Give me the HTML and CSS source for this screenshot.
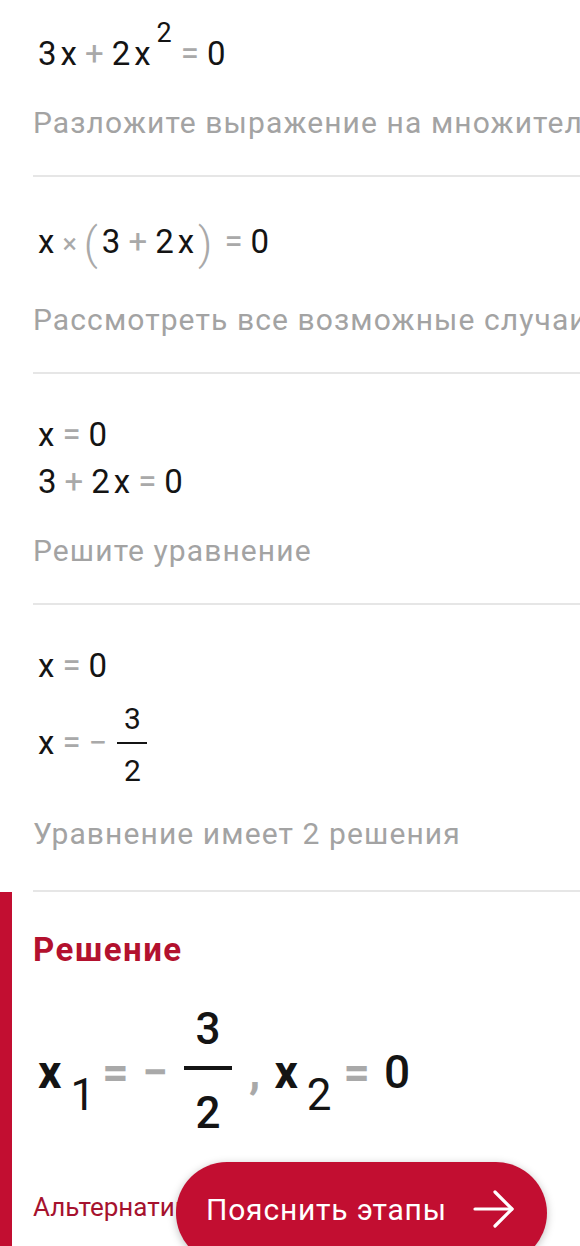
FILE: index.html
```html
<!DOCTYPE html>
<html lang="ru">
<head>
    <meta charset="UTF-8">
    <meta name="viewport" content="width=device-width, initial-scale=1.0">
    <title>Решение уравнения</title>
    <link rel="stylesheet" href="styles.css">
</head>
<body>
    <div class="page">
        <div class="steps">
            <div class="step">
                <div class="math">
                    <div class="row"><span>3</span><span class="v">x</span><span class="op">+</span><span>2</span><span class="v">x</span><span class="sup">2</span><span class="op">=</span><span>0</span></div>
                </div>
                <p class="hint">Разложите выражение на множители</p>
            </div>

            <div class="step">
                <div class="math">
                    <div class="row"><span>x</span><span class="op times">×</span><span class="paren">(</span><span>3</span><span class="op">+</span><span>2</span><span class="v">x</span><span class="paren">)</span><span class="op">=</span><span>0</span></div>
                </div>
                <p class="hint">Рассмотреть все возможные случаи</p>
            </div>

            <div class="step">
                <div class="math">
                    <div class="row"><span>x</span><span class="op">=</span><span>0</span></div>
                    <div class="row"><span>3</span><span class="op">+</span><span>2</span><span class="v">x</span><span class="op">=</span><span>0</span></div>
                </div>
                <p class="hint">Решите уравнение</p>
            </div>

            <div class="step">
                <div class="math">
                    <div class="row"><span>x</span><span class="op">=</span><span>0</span></div>
                    <div class="row frac-row"><span>x</span><span class="op">=</span><span class="op minus">−</span><span class="frac"><span>3</span><span class="bar"></span><span>2</span></span></div>
                </div>
                <p class="hint">Уравнение имеет 2 решения</p>
            </div>
        </div>

        <div class="solution">
            <h2>Решение</h2>
            <div class="answer"><span class="v">x</span><span class="sub">1</span><span class="op">=</span><span class="op minus">−</span><span class="frac"><span>3</span><span class="bar"></span><span>2</span></span><span class="op comma">,</span><span class="v">x</span><span class="sub">2</span><span class="op last">=</span><span>0</span></div>
            <p class="alt">Альтернативная форма</p>
        </div>

        <!-- floating button over the bottom of the page -->
        <a href="#" class="explain-btn">
            Пояснить этапы
            <svg width="42" height="38" viewBox="0 0 42 38" fill="none" stroke="white" stroke-width="3.2" stroke-linecap="round" stroke-linejoin="round">
                <path d="M2 19 H39"/>
                <path d="M22 2 L39 19 L22 36"/>
            </svg>
        </a>
    </div>
</body>
</html>
```

FILE: styles.css
```css
body {
    margin: 0;
    font-family: Roboto, "Noto Sans", Arial, sans-serif;
    background-color: #fff;
    color: #141414;
}

.page {
    position: relative;
    width: 580px;
    height: 1246px;
    overflow: hidden;
}

.step {
    margin-left: 33px;
    padding: 37px 0 34px;
    border-bottom: 2px solid #e6e6e6;
}

.step:first-child {
    padding-top: 30px;
}

.step:last-child {
    padding-bottom: 38px;
}

.math {
    padding-left: 5px;
    font-size: 33px;
    line-height: 47px;
}

.row {
    white-space: nowrap;
}

.row .v {
    margin-left: 4px;
}

.op {
    color: #a9a9a9;
    margin: 0 8px;
}

.times {
    font-size: 27px;
    margin: 0 3px 0 8px;
}

.minus {
    margin: 0 2px 0 0;
}

.sup {
    font-size: 27px;
    line-height: 0;
    vertical-align: 23px;
    margin-left: 6px;
    margin-right: 1px;
}

.paren {
    color: #a9a9a9;
    font-size: 44px;
    font-weight: 300;
    line-height: 60px;
    vertical-align: -6px;
    margin: 0 4px;
}

.frac {
    display: inline-flex;
    flex-direction: column;
    align-items: center;
    vertical-align: middle;
    font-size: 30px;
    line-height: 34px;
    margin-left: 8px;
}

.frac .bar {
    width: 30px;
    height: 2px;
    background-color: #141414;
    margin: 6px 0 10px;
}

.frac-row {
    margin: 13px 0 9px;
}

.hint {
    margin: 28px 0 0;
    font-size: 30px;
    line-height: 36px;
    letter-spacing: 1.1px;
    color: #a3a3a3;
    white-space: nowrap;
}

.solution {
    padding: 38px 0 0 21px;
    border-left: 12px solid #c20e31;
    height: 400px;
}

.solution h2 {
    margin: 0;
    font-size: 33px;
    line-height: 40px;
    letter-spacing: 1.5px;
    font-weight: 700;
    color: #b3112e;
}

.answer {
    margin-top: 37px;
    padding-left: 5px;
    font-size: 46px;
    line-height: 54px;
    font-weight: 500;
    white-space: nowrap;
}

.answer .v {
    font-weight: 700;
    margin: 0;
}

.answer .sub {
    font-size: 44px;
    font-weight: 400;
    line-height: 0;
    vertical-align: -22px;
    margin-left: 9px;
}

.answer .op {
    font-weight: 700;
    margin: 0 14px 0 7px;
}

.answer .minus {
    margin: 0 4px 0 0;
}

.answer .comma {
    margin: 0 14px 0 17px;
}

.answer .last {
    margin-left: 12px;
}

.answer .frac {
    font-size: 44px;
    line-height: 44px;
    vertical-align: 44px;
    margin-left: 12px;
}

.answer .frac .bar {
    width: 48px;
    height: 4px;
    margin: 15px 0 21px;
}

.alt {
    margin: 56px 0 0;
    font-size: 26px;
    line-height: 32px;
    color: #a6122e;
}

.explain-btn {
    position: absolute;
    left: 176px;
    top: 1162px;
    width: 371px;
    height: 102px;
    box-sizing: border-box;
    padding: 0 0 8px 30px;
    display: flex;
    align-items: center;
    gap: 26px;
    background-color: #c20e31;
    border-radius: 51px;
    box-shadow: 0 2px 8px rgba(0, 0, 0, 0.25);
    color: #fff;
    font-size: 30px;
    letter-spacing: 0.8px;
    text-decoration: none;
}
```
